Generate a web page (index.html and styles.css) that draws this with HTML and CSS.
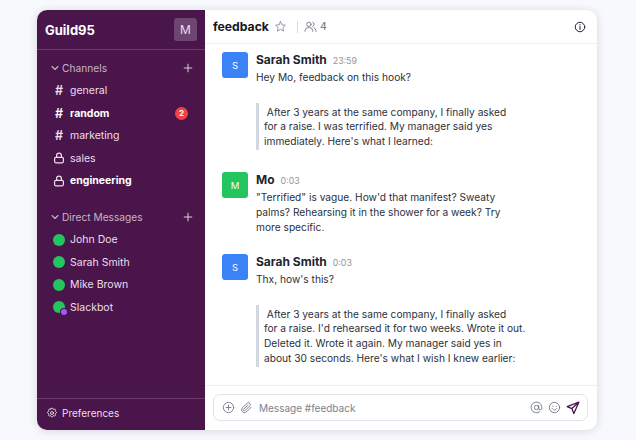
FILE: index.html
```html
<!DOCTYPE html>
<html lang="en">
<head>
    <meta charset="UTF-8">
    <title>Guild95</title>
    <link rel="stylesheet" href="styles.css">
</head>
<body>
    <div class="app">
        <aside class="sidebar">
            <div class="brand">
                <span class="brand-name">Guild95</span>
                <span class="brand-avatar">M</span>
            </div>
            <div class="nav">
                <div class="section-head">
                    <svg class="chevron" viewBox="0 0 10 10"><path d="M2 3.5l3 3 3-3"/></svg>
                    <span class="section-title">Channels</span>
                    <svg class="plus" viewBox="0 0 10 10"><path d="M5 1.2v7.6M1.2 5h7.6"/></svg>
                </div>
                <div class="row"><span class="hash">#</span><span>general</span></div>
                <div class="row bold"><span class="hash">#</span><span>random</span><span class="badge">2</span></div>
                <div class="row"><span class="hash">#</span><span>marketing</span></div>
                <div class="row">
                    <svg class="lock" viewBox="0 0 12 12"><rect x="1.6" y="5.4" width="8.8" height="5.4" rx="1.2"/><path d="M3.6 5.4V3.6a2.4 2.4 0 0 1 4.8 0v1.8"/></svg>
                    <span>sales</span>
                </div>
                <div class="row bold">
                    <svg class="lock" viewBox="0 0 12 12"><rect x="1.6" y="5.4" width="8.8" height="5.4" rx="1.2"/><path d="M3.6 5.4V3.6a2.4 2.4 0 0 1 4.8 0v1.8"/></svg>
                    <span>engineering</span>
                </div>
                <div class="section-head dm-head">
                    <svg class="chevron" viewBox="0 0 10 10"><path d="M2 3.5l3 3 3-3"/></svg>
                    <span class="section-title">Direct Messages</span>
                    <svg class="plus" viewBox="0 0 10 10"><path d="M5 1.2v7.6M1.2 5h7.6"/></svg>
                </div>
                <div class="row"><span class="dot"></span><span>John Doe</span></div>
                <div class="row"><span class="dot"></span><span>Sarah Smith</span></div>
                <div class="row"><span class="dot"></span><span>Mike Brown</span></div>
                <div class="row"><span class="dot bot"></span><span>Slackbot</span></div>
            </div>
            <div class="prefs">
                <svg class="gear" viewBox="0 0 24 24"><path d="M10.3 3.3c.4-1.8 3-1.8 3.4 0a1.7 1.7 0 0 0 2.6 1.1c1.5-.9 3.3.8 2.4 2.4a1.7 1.7 0 0 0 1 2.5c1.8.5 1.8 3 0 3.4a1.7 1.7 0 0 0-1 2.6c.9 1.5-.9 3.3-2.4 2.4a1.7 1.7 0 0 0-2.6 1c-.4 1.8-3 1.8-3.4 0a1.7 1.7 0 0 0-2.6-1c-1.5.9-3.3-.9-2.4-2.4a1.7 1.7 0 0 0-1-2.6c-1.8-.4-1.8-3 0-3.4a1.7 1.7 0 0 0 1-2.5c-.9-1.6.9-3.3 2.4-2.4a1.7 1.7 0 0 0 2.6-1.1z"/><circle cx="12" cy="12" r="3"/></svg>
                <span>Preferences</span>
            </div>
        </aside>
        <main class="chat">
            <header class="chat-head">
                <span class="chat-title">feedback</span>
                <svg class="star" viewBox="0 0 24 24"><path d="M12 3l2.8 5.800 6.200.9-4.500 4.400 1.100 6.300-5.600-3-5.600 3 1.100-6.300L3 9.700l6.200-.9z"/></svg>
                <span class="divider"></span>
                <svg class="people" viewBox="0 0 24 24"><circle cx="9" cy="8" r="4"/><path d="M2 21v-1.500a6 6 0 0 1 6-5.500h2a6 6 0 0 1 6 5.500V21M16 4.200a4 4 0 0 1 0 7.600M18.500 14.300a6 6 0 0 1 3.500 5.200V21"/></svg>
                <span class="count">4</span>
                <svg class="info" viewBox="0 0 24 24"><circle cx="12" cy="12" r="9.500"/><path d="M12 11v6M12 7v1"/></svg>
            </header>
            <div class="messages">
                <div class="msg">
                    <span class="avatar blue">S</span>
                    <div class="msg-body">
                        <div class="msg-meta"><span class="author">Sarah Smith</span><span class="time">23:59</span></div>
                        <p class="text">Hey Mo, feedback on this hook?</p>
                        <blockquote class="quote">&nbsp;After 3 years at the same company, I finally asked<br>for a raise. I was terrified. My manager said yes<br>immediately. Here's what I learned:</blockquote>
                    </div>
                </div>
                <div class="msg">
                    <span class="avatar green">M</span>
                    <div class="msg-body">
                        <div class="msg-meta"><span class="author">Mo</span><span class="time">0:03</span></div>
                        <p class="text">"Terrified" is vague. How'd that manifest? Sweaty<br>palms? Rehearsing it in the shower for a week? Try<br>more specific.</p>
                    </div>
                </div>
                <div class="msg">
                    <span class="avatar blue">S</span>
                    <div class="msg-body">
                        <div class="msg-meta"><span class="author">Sarah Smith</span><span class="time">0:03</span></div>
                        <p class="text">Thx, how's this?</p>
                        <blockquote class="quote">&nbsp;After 3 years at the same company, I finally asked<br>for a raise. I'd rehearsed it for two weeks. Wrote it out.<br>Deleted it. Wrote it again. My manager said yes in<br>about 30 seconds. Here's what I wish I knew earlier:</blockquote>
                    </div>
                </div>
            </div>
            <div class="composer-wrap">
                <div class="composer">
                    <svg class="tool" viewBox="0 0 24 24"><circle cx="12" cy="12" r="9.500"/><path d="M12 7.500v9M7.500 12h9"/></svg>
                    <svg class="tool" viewBox="0 0 24 24"><path d="M20.500 11.500l-8.600 8.600a5.200 5.200 0 0 1-7.400-7.400l8.900-8.900a3.500 3.500 0 0 1 4.900 4.900l-8.900 8.900a1.700 1.700 0 0 1-2.500-2.500l8-8"/></svg>
                    <span class="placeholder">Message #feedback</span>
                    <svg class="tool" viewBox="0 0 24 24"><circle cx="12" cy="12" r="4"/><path d="M16 8v5a3 3 0 0 0 6 0v-1a10 10 0 1 0-4 8"/></svg>
                    <svg class="tool" viewBox="0 0 24 24"><circle cx="12" cy="12" r="9.500"/><path d="M8 14s1.500 2.500 4 2.500 4-2.500 4-2.500M9 9.500v.5M15 9.500v.5"/></svg>
                    <svg class="send" viewBox="0 0 24 24"><path d="M22 2L2 9.500l8 3.500 3.500 8.500zM22 2L10 13"/></svg>
                </div>
            </div>
        </main>
    </div>
</body>
</html>
```

FILE: styles.css
```css
body {
    margin: 0;
    height: 440px;
    overflow: hidden;
    background-color: #f8f9fc;
    font-family: Inter, "Noto Sans", sans-serif;
    color: #1f2430;
}
svg {
    flex: none;
    fill: none;
    stroke-linecap: round;
    stroke-linejoin: round;
}
.app {
    display: flex;
    width: 560px;
    height: 420px;
    margin: 10px 0 0 37px;
    background-color: #fff;
    border-radius: 10px;
    overflow: hidden;
    box-shadow: 0 1px 8px rgba(30, 35, 60, 0.16);
}

/* sidebar */
.sidebar {
    width: 168px;
    flex: none;
    display: flex;
    flex-direction: column;
    background-color: #4a154b;
    color: #ecdfec;
    font-size: 10.5px;
}
.brand {
    height: 39px;
    flex: none;
    display: flex;
    align-items: center;
    justify-content: space-between;
    padding: 0 8px;
    border-bottom: 1px solid #6a3b6b;
}
.brand-name {
    font-size: 13px;
    font-weight: 700;
    color: #fff;
}
.brand-avatar {
    width: 23px;
    height: 23px;
    display: flex;
    align-items: center;
    justify-content: center;
    border-radius: 3px;
    background-color: #6e4470;
    font-size: 12px;
}
.nav {
    flex: 1;
    padding: 7px 0 0 13px;
}
.section-head {
    display: flex;
    align-items: center;
    height: 22.5px;
    font-size: 10.2px;
    color: #c8b4c9;
}
.dm-head {
    margin-top: 14px;
}
.chevron {
    width: 10px;
    height: 10px;
    stroke: #c8b4c9;
    stroke-width: 1.1;
}
.section-title {
    margin-left: 2px;
    flex: 1;
}
.plus {
    width: 10px;
    height: 10px;
    margin-right: 12px;
    stroke: #ddcfdd;
    stroke-width: 1;
}
.row {
    display: flex;
    align-items: center;
    gap: 5px;
    height: 22.5px;
    padding-left: 3px;
}
.bold {
    font-weight: 700;
    color: #fff;
}
.hash {
    width: 12px;
    text-align: center;
    font-size: 12.5px;
    font-weight: 600;
}
.lock {
    width: 12px;
    height: 12px;
    stroke: #ecdfec;
    stroke-width: 1.2;
}
.badge {
    width: 13px;
    height: 13px;
    margin: 0 17px 0 auto;
    display: flex;
    align-items: center;
    justify-content: center;
    border-radius: 50%;
    background-color: #ef4444;
    font-size: 8px;
}
.dot {
    width: 12px;
    height: 12px;
    border-radius: 50%;
    background-color: #22c55e;
    position: relative;
}
.bot::after {
    content: "";
    position: absolute;
    right: -2px;
    bottom: -2px;
    width: 6px;
    height: 6px;
    border-radius: 50%;
    background-color: #a855f7;
    box-shadow: 0 0 0 1px #4a154b;
}
.prefs {
    height: 32px;
    flex: none;
    display: flex;
    align-items: center;
    gap: 4px;
    padding: 0 0 3px 9px;
    box-sizing: border-box;
    font-size: 10px;
    border-top: 1px solid #6a3b6b;
}
.gear {
    width: 12px;
    height: 12px;
    stroke: #ecdfec;
    stroke-width: 1.8;
}

/* chat */
.chat {
    flex: 1;
    min-width: 0;
    display: flex;
    flex-direction: column;
}
.chat-head {
    height: 33px;
    flex: none;
    display: flex;
    align-items: center;
    padding: 0 11px 0 8px;
    border-bottom: 1px solid #eceef2;
}
.chat-title {
    font-size: 12.2px;
    font-weight: 700;
    color: #14171f;
}
.star {
    width: 13px;
    height: 13px;
    margin-left: 5px;
    stroke: #7b8290;
    stroke-width: 1.5;
}
.divider {
    width: 1px;
    height: 12px;
    margin: 0 6px 0 10px;
    background-color: #d8dbe1;
}
.people {
    width: 13px;
    height: 13px;
    stroke: #6b7280;
    stroke-width: 1.6;
}
.count {
    margin: 0 auto 0 3px;
    font-size: 10.5px;
    color: #6b7280;
}
.info {
    width: 12px;
    height: 12px;
    stroke: #1f2430;
    stroke-width: 2;
}
.messages {
    flex: 1;
    min-height: 0;
    overflow: hidden;
    padding: 8px 0 0 17px;
}
.msg {
    display: flex;
    gap: 8px;
    margin-bottom: 20px;
}
.avatar {
    width: 26px;
    height: 26px;
    flex: none;
    display: flex;
    align-items: center;
    justify-content: center;
    border-radius: 3px;
    color: #fff;
    font-size: 9.5px;
}
.blue {
    background-color: #3b82f6;
}
.green {
    background-color: #22c55e;
}
.msg-meta {
    display: flex;
    align-items: baseline;
    gap: 6px;
    height: 18px;
}
.author {
    font-size: 12px;
    font-weight: 700;
}
.time {
    font-size: 8.8px;
    color: #8f95a1;
}
.text {
    margin: 0;
    font-size: 10.2px;
    line-height: 14.6px;
    color: #2b303b;
}
.quote {
    margin: 18px 0 2px;
    padding: 2px 0 2px 5px;
    border-left: 3px solid #d3d7e0;
    font-size: 10.2px;
    line-height: 14.6px;
    color: #2b303b;
}
.composer-wrap {
    height: 45px;
    flex: none;
    padding: 8px 9px 0 8px;
    box-sizing: border-box;
    border-top: 1px solid #eceef2;
}
.composer {
    height: 27px;
    box-sizing: border-box;
    display: flex;
    align-items: center;
    gap: 5px;
    padding: 0 7px 0 8px;
    border: 1px solid #dfe2e8;
    border-radius: 7px;
}
.tool {
    width: 13px;
    height: 13px;
    stroke: #6b7280;
    stroke-width: 1.6;
}
.placeholder {
    flex: 1;
    margin-left: 1px;
    font-size: 10px;
    color: #7b8290;
}
.send {
    width: 14px;
    height: 14px;
    stroke: #4a154b;
    stroke-width: 2.2;
}
```
